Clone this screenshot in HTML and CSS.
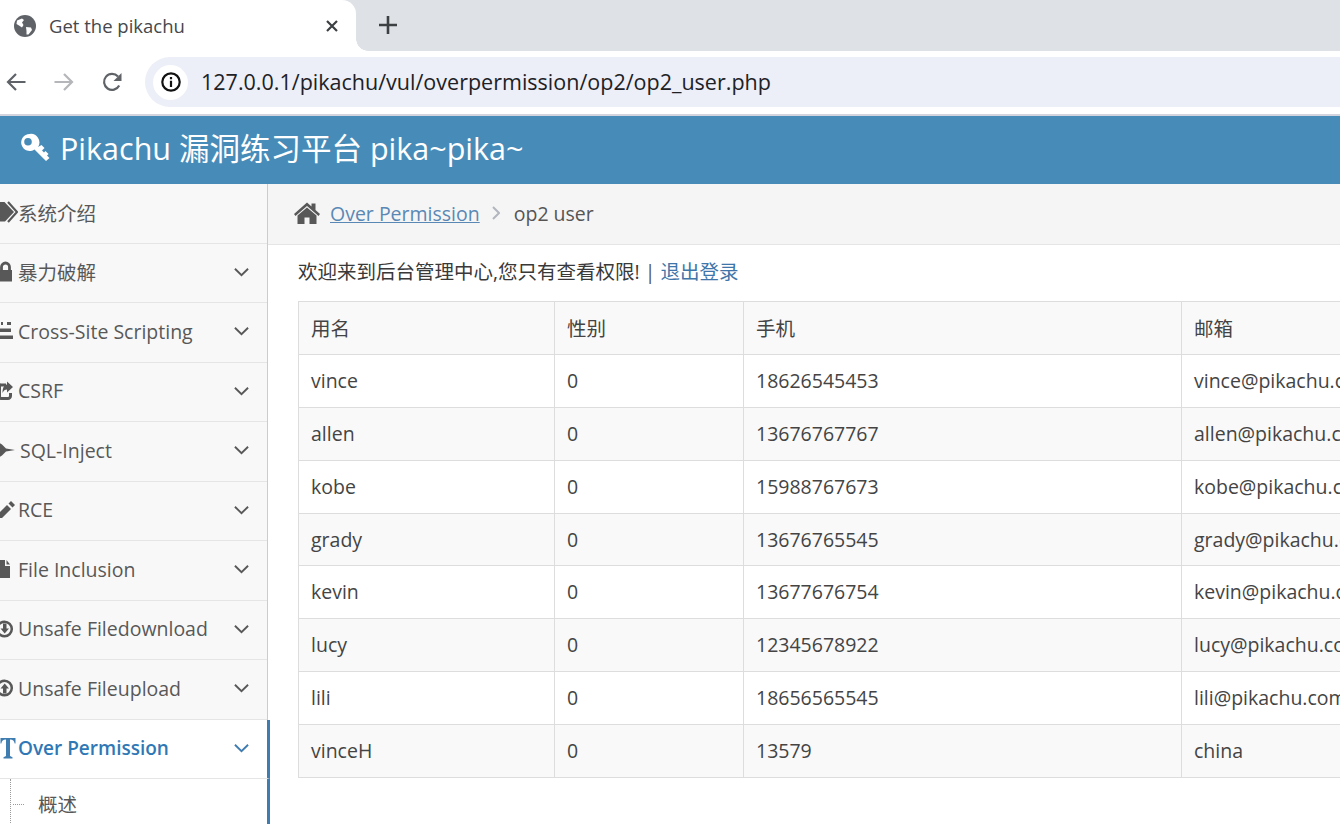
FILE: index.html
```html
<!DOCTYPE html>
<html lang="zh-CN">
<head>
    <meta charset="UTF-8">
    <title>Get the pikachu</title>
    <link rel="stylesheet" href="styles.css">
</head>
<body>
    <header class="browser">
        <div class="tabstrip">
            <div class="tab">
                <svg class="tab-globe" viewBox="0 0 22 22"><circle cx="11" cy="11" r="11" fill="#5f6368"/><path d="M3 5.500 8 3.500 10 5 8 7.500 9.500 10 8 12.500 5 10.500 2.500 9ZM12 12 17 12.500 18 15 14.500 19.500 12.500 19.500 12.500 16Z" fill="#fff"/></svg>
                <span class="tab-title">Get the pikachu</span>
                <svg class="tab-close" viewBox="0 0 12 12"><path d="M1 1 11 11M11 1 1 11" stroke="#3c4043" stroke-width="2.200" fill="none"/></svg>
            </div>
            <div class="tab-flare"></div>
            <svg class="new-tab" viewBox="0 0 18 18"><path d="M9 0V18M0 9H18" stroke="#3c4043" stroke-width="2.600" fill="none"/></svg>
        </div>
        <div class="toolbar">
            <svg class="nav-icon" viewBox="0 0 20 20"><path d="M19.500 10H2M10 2 2 10 10 18" stroke="#5f6368" stroke-width="2.200" fill="none"/></svg>
            <svg class="nav-icon nav-forward" viewBox="0 0 20 20"><path d="M.5 10H18M10 2 18 10 10 18" stroke="#b4b6b9" stroke-width="2.200" fill="none"/></svg>
            <svg class="nav-icon nav-reload" viewBox="0 0 20 20"><path d="M17.200 13.500A8 8 0 1 1 16 4.500" stroke="#5f6368" stroke-width="2.200" fill="none"/><path d="M19.500 1V9H11.500Z" fill="#5f6368"/></svg>
            <div class="omnibox">
                <span class="site-info">
                    <svg viewBox="0 0 20 20"><circle cx="10" cy="10" r="8.700" stroke="#111" stroke-width="2.200" fill="none"/><path d="M8.900 8.800H11.100V15H8.900ZM8.900 5H11.100V7.200H8.900Z" fill="#111"/></svg>
                </span>
                <span class="url">127.0.0.1/pikachu/vul/overpermission/op2/op2_user.php</span>
            </div>
        </div>
    </header>

    <div class="navbar">
        <svg class="brand-key" viewBox="0 0 30 30"><path d="M9.500 1A8.500 8.500 0 1 0 14.500 16.500L24 26 26 28 29.500 25 27 22.500 28.500 21 25.500 18 24 19.500 22 17.500 24.500 15 21.500 12 18 14A8.500 8.500 0 0 0 9.500 1ZM8 5A3.800 3.800 0 1 1 8 12.600 3.800 3.800 0 0 1 8 5Z" fill="#fff" fill-rule="evenodd"/></svg>
        <span class="brand">Pikachu 漏洞练习平台 pika~pika~</span>
    </div>

    <div class="layout">
        <aside class="sidebar">
            <a class="menu-item">
                <svg class="menu-icon" viewBox="0 0 18 24"><path d="M-5 2H4.500L14 12 5 21.500-5 21.500Z" fill="#585858"/><path d="M8 2 17 12 8 22" stroke="#585858" stroke-width="2.200" fill="none"/></svg>
                <span class="menu-label">系统介绍</span>
            </a>
            <a class="menu-item">
                <svg class="menu-icon" viewBox="0 0 18 24"><path d="M-1 10H12V21.500H-1Z" fill="#585858"/><path d="M1.500 11V7A4 4 0 0 1 9.500 7V11" stroke="#585858" stroke-width="2.800" fill="none"/></svg>
                <span class="menu-label">暴力破解</span>
                <svg class="chevron" viewBox="0 0 16 10"><path d="M1 1.500 8 8.500 15 1.500" stroke="#585858" stroke-width="2" fill="none"/></svg>
            </a>
            <a class="menu-item">
                <svg class="menu-icon" viewBox="0 0 18 24"><path d="M1 3H3V6H1ZM7 3H11V6H7ZM0 9.500H3V13H0ZM3 9.500H11V13H3ZM0 16.500H13V20H0Z" fill="#585858"/></svg>
                <span class="menu-label">Cross-Site Scripting</span>
                <svg class="chevron" viewBox="0 0 16 10"><path d="M1 1.500 8 8.500 15 1.500" stroke="#585858" stroke-width="2" fill="none"/></svg>
            </a>
            <a class="menu-item">
                <svg class="menu-icon" viewBox="0 0 18 24"><path d="M6 6H1A1 1 0 0 0 -.5 7V17A2 2 0 0 0 1.500 19.500H8A2.500 2.500 0 0 0 10.500 17V14" stroke="#585858" stroke-width="3" fill="none"/><path d="M7 2.500 13 8 7 13.500V10.500C5 10.500 3.500 11.500 2.500 14 2.500 9 4 6 7 5.500Z" fill="#585858"/></svg>
                <span class="menu-label">CSRF</span>
                <svg class="chevron" viewBox="0 0 16 10"><path d="M1 1.500 8 8.500 15 1.500" stroke="#585858" stroke-width="2" fill="none"/></svg>
            </a>
            <a class="menu-item">
                <svg class="menu-icon menu-icon-wide" viewBox="0 0 20 24"><path d="M-2 4 2 6.500 6 10.500 15 12 6 13.500 2 17.500-2 20Z" fill="#585858"/></svg>
                <span class="menu-label">SQL-Inject</span>
                <svg class="chevron" viewBox="0 0 16 10"><path d="M1 1.500 8 8.500 15 1.500" stroke="#585858" stroke-width="2" fill="none"/></svg>
            </a>
            <a class="menu-item">
                <svg class="menu-icon" viewBox="0 0 18 24"><path d="M-2 20V16L7 7 11 11 2 20ZM8.500 5.500 11 3 15 7 12.500 9.500Z" fill="#585858"/></svg>
                <span class="menu-label">RCE</span>
                <svg class="chevron" viewBox="0 0 16 10"><path d="M1 1.500 8 8.500 15 1.500" stroke="#585858" stroke-width="2" fill="none"/></svg>
            </a>
            <a class="menu-item">
                <svg class="menu-icon" viewBox="0 0 18 24"><path d="M-1 3H5V9H10V21H-1ZM6.500 3 10 7.500H6.500Z" fill="#585858"/></svg>
                <span class="menu-label">File Inclusion</span>
                <svg class="chevron" viewBox="0 0 16 10"><path d="M1 1.500 8 8.500 15 1.500" stroke="#585858" stroke-width="2" fill="none"/></svg>
            </a>
            <a class="menu-item">
                <svg class="menu-icon" viewBox="0 0 18 24"><circle cx="4.500" cy="12" r="7.300" stroke="#585858" stroke-width="2.500" fill="none"/><path d="M3 6.500H6.500V11.500H9L4.700 16.500 .5 11.500H3Z" fill="#585858"/></svg>
                <span class="menu-label">Unsafe Filedownload</span>
                <svg class="chevron" viewBox="0 0 16 10"><path d="M1 1.500 8 8.500 15 1.500" stroke="#585858" stroke-width="2" fill="none"/></svg>
            </a>
            <a class="menu-item">
                <svg class="menu-icon" viewBox="0 0 18 24"><circle cx="4.500" cy="12" r="7.300" stroke="#585858" stroke-width="2.500" fill="none"/><path d="M3 17.500H6.500V12.500H9L4.700 7.500 .5 12.500H3Z" fill="#585858"/></svg>
                <span class="menu-label">Unsafe Fileupload</span>
                <svg class="chevron" viewBox="0 0 16 10"><path d="M1 1.500 8 8.500 15 1.500" stroke="#585858" stroke-width="2" fill="none"/></svg>
            </a>
            <a class="menu-item active">
                <svg class="menu-icon" viewBox="0 0 18 24"><path d="M.5 2H15.500V7.500H14.700C14.200 5 13 3.500 10 3.500V20L12.500 21.200V22.500H3.500V21.200L6 20V3.500C3 3.500 1.800 5 1.300 7.500H.5Z" fill="#3f7cb0"/></svg>
                <span class="menu-label">Over Permission</span>
                <svg class="chevron" viewBox="0 0 16 10"><path d="M1 1.500 8 8.500 15 1.500" stroke="#3f7cb0" stroke-width="2" fill="none"/></svg>
            </a>
            <ul class="submenu">
                <li class="submenu-item">概述</li>
            </ul>
        </aside>

        <main class="content">
            <div class="breadcrumb">
                <svg class="home-icon" viewBox="0 0 26 22"><path d="M13 .5 17.500 4.500V1.500H21.500V8L26 12 24.500 14 13 4 1.500 14 0 12Z" fill="#585858"/><path d="M13 5.500 22.500 13.500V22H15.500V15.500H10.500V22H3.500V13.500Z" fill="#585858"/></svg>
                <a class="crumb-link">Over Permission</a>
                <svg class="crumb-sep" viewBox="0 0 8 14"><path d="M1 1 7 7 1 13" stroke="#b2b6bf" stroke-width="2" fill="none"/></svg>
                <span class="crumb-current">op2 user</span>
            </div>
            <div class="page-body">
                <p class="welcome">欢迎来到后台管理中心,您只有查看权限! <span class="welcome-sep">|</span> <a class="logout">退出登录</a></p>
                <table class="user-table">
                    <colgroup>
                        <col class="col-name">
                        <col class="col-sex">
                        <col class="col-phone">
                        <col class="col-email">
                    </colgroup>
                    <thead>
                        <tr><th>用名</th><th>性别</th><th>手机</th><th>邮箱</th></tr>
                    </thead>
                    <tbody>
                        <tr><td>vince</td><td>0</td><td>18626545453</td><td>vince@pikachu.com</td></tr>
                        <tr><td>allen</td><td>0</td><td>13676767767</td><td>allen@pikachu.com</td></tr>
                        <tr><td>kobe</td><td>0</td><td>15988767673</td><td>kobe@pikachu.com</td></tr>
                        <tr><td>grady</td><td>0</td><td>13676765545</td><td>grady@pikachu.com</td></tr>
                        <tr><td>kevin</td><td>0</td><td>13677676754</td><td>kevin@pikachu.com</td></tr>
                        <tr><td>lucy</td><td>0</td><td>12345678922</td><td>lucy@pikachu.com</td></tr>
                        <tr><td>lili</td><td>0</td><td>18656565545</td><td>lili@pikachu.com</td></tr>
                        <tr><td>vinceH</td><td>0</td><td>13579</td><td>china</td></tr>
                    </tbody>
                </table>
            </div>
        </main>
    </div>
</body>
</html>
```
FILE: styles.css
```css
html, body {
    margin: 0;
    padding: 0;
}
body {
    height: 100vh;
    overflow: hidden;
    display: flex;
    flex-direction: column;
    background: #fff;
    color: #393939;
    font-family: "Open Sans", "Noto Sans CJK SC", sans-serif;
    font-size: 19.5px;
}

/* browser chrome */
.tabstrip {
    height: 51px;
    display: flex;
    align-items: center;
    background: #dee1e6;
}
.tab {
    width: 356px;
    height: 51px;
    box-sizing: border-box;
    padding: 0 15px 0 14px;
    display: flex;
    align-items: center;
    background: #fff;
    border-top-right-radius: 14px;
}
.tab-globe {
    width: 22px;
    height: 22px;
    flex: none;
}
.tab-title {
    flex: 1;
    margin-left: 13px;
    font-size: 18.500px;
    color: #45484c;
}
.tab-close {
    width: 12px;
    height: 12px;
    margin-right: 3px;
}
.tab-flare {
    width: 12px;
    height: 12px;
    align-self: flex-end;
    background: radial-gradient(circle at 100% 0, #dee1e6 11.500px, #fff 12px);
}
.new-tab {
    width: 18px;
    height: 18px;
    margin-left: 11px;
    margin-bottom: 1px;
}
.toolbar {
    height: 65px;
    box-sizing: border-box;
    padding: 6px 0 7px 6px;
    display: flex;
    align-items: center;
    background: #fff;
    border-bottom: 2px solid #d4d4de;
}
.nav-icon {
    width: 20px;
    height: 20px;
    margin-right: 28px;
    flex: none;
}
.nav-reload {
    margin-right: 23px;
}
.omnibox {
    flex: 1;
    height: 50px;
    display: flex;
    align-items: center;
    padding-left: 8px;
    background: #eceef8;
    border-radius: 25px 0 0 25px;
}
.site-info {
    width: 35px;
    height: 35px;
    display: flex;
    align-items: center;
    justify-content: center;
    background: #fff;
    border-radius: 50%;
}
.site-info svg {
    width: 20px;
    height: 20px;
}
.url {
    margin: 0 0 2px 13px;
    font-size: 21.520px;
    color: #202124;
}

/* page header */
.navbar {
    height: 68px;
    flex: none;
    box-sizing: border-box;
    display: flex;
    align-items: center;
    padding: 0 0 4px 20px;
    background: #478cb8;
    color: #fff;
}
.brand-key {
    width: 30px;
    height: 30px;
}
.brand {
    margin-left: 10px;
    font-size: 30.500px;
    line-height: 40px;
}

.layout {
    flex: 1;
    min-height: 0;
    display: flex;
}

/* sidebar */
.sidebar {
    width: 267px;
    flex: none;
    background: #f8f8f8;
    border-right: 1px solid #ccc;
    color: #585858;
}
.menu-item {
    height: 59.500px;
    box-sizing: border-box;
    display: flex;
    align-items: center;
    padding: 0 18px 2px 0;
    border-bottom: 1px solid #e5e5e5;
}
.menu-icon {
    width: 18px;
    height: 24px;
    flex: none;
}
.menu-icon-wide {
    width: 20px;
}
.menu-label {
    flex: 1;
    white-space: nowrap;
}
.chevron {
    width: 15px;
    height: 10px;
    flex: none;
}
.menu-item.active {
    background: #fff;
    color: #2f78b5;
    font-weight: 600;
    font-size: 19px;
    margin-right: -3px;
    border-right: 3px solid #3f7cb0;
}
.submenu {
    list-style: none;
    margin: 0 -3px 0 0;
    padding: 0 0 0 38px;
    height: 60px;
    background: #fff;
    border-right: 3px solid #3f7cb0;
    position: relative;
}
.submenu::before {
    content: "";
    position: absolute;
    left: 10px;
    top: 0;
    bottom: 0;
    border-left: 1px dotted #9a9a9a;
}
.submenu-item {
    height: 51px;
    line-height: 51px;
    position: relative;
}
.submenu-item::before {
    content: "";
    position: absolute;
    left: -25px;
    top: 25px;
    width: 11px;
    border-top: 1px dotted #9a9a9a;
}

/* main area */
.content {
    flex: 1;
    min-width: 0;
    overflow: hidden;
}
.breadcrumb {
    height: 61px;
    box-sizing: border-box;
    display: flex;
    align-items: center;
    padding: 0 0 2px 26px;
    background: #f5f5f5;
    border-bottom: 1px solid #e5e5e5;
    color: #555;
}
.home-icon {
    width: 26px;
    height: 22px;
    margin-bottom: 1px;
}
.crumb-link {
    margin-left: 10px;
    color: #5a88b5;
    text-decoration: underline;
}
.crumb-sep {
    width: 8px;
    height: 14px;
    margin: 0 14px 0 12px;
}
.page-body {
    padding: 0 0 0 30px;
}
.welcome {
    margin: 0;
    height: 56px;
    line-height: 53px;
    white-space: nowrap;
}
.welcome-sep {
    color: #555;
}
.logout {
    color: #3f75a8;
}
.user-table {
    width: 1400px;
    table-layout: fixed;
    border-collapse: collapse;
    border-spacing: 0;
}
.col-name { width: 256px; }
.col-sex { width: 189px; }
.col-phone { width: 438px; }
.user-table th,
.user-table td {
    height: 52.900px;
    box-sizing: border-box;
    padding: 0 12px 1px;
    border: 1px solid #ddd;
    text-align: left;
    font-weight: 400;
    white-space: nowrap;
    color: #444;
}
.user-table th {
    background: #f9f9f9;
}
.user-table tbody tr:nth-child(even) {
    background: #f9f9f9;
}
```
